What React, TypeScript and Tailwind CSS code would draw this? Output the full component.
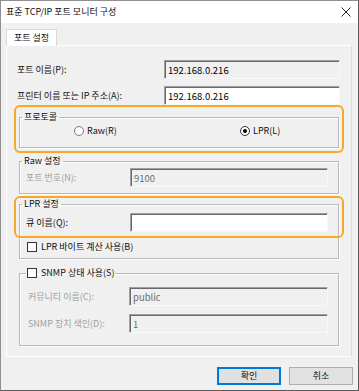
import type { ReactNode } from 'react';

const font = { fontFamily: '"Noto Sans CJK KR", "Noto Sans", sans-serif' };

function Sunken({ value, disabled, white }: { value: string; disabled?: boolean; white?: boolean }) {
  return (
    <div
      className={`h-[19px] flex items-center px-[3px] text-[9.5px] border border-t-[#a0a0a0] border-l-[#a0a0a0] border-r-[#f8f8f8] border-b-[#f8f8f8] shadow-[inset_1px_1px_0_#696969] ${
        white ? 'bg-white' : 'bg-[#f0f0f0]'
      } ${disabled ? 'text-[#6d6d6d]' : 'text-black'}`}
    >
      {value}
    </div>
  );
}

function Group({ legend, children, className }: { legend: ReactNode; children: ReactNode; className: string }) {
  return (
    <fieldset className={`mx-[12px] border border-[#b9b9b9] shadow-[1px_1px_0_#fff,inset_1px_1px_0_#fff] ${className}`}>
      <legend className="ml-[2px] px-[2px] h-[14px] leading-[14px]">{legend}</legend>
      {children}
    </fieldset>
  );
}

function Radio({ checked, label }: { checked?: boolean; label: string }) {
  return (
    <div className="flex items-center gap-[3px]">
      <span
        className={`size-[10px] rounded-full border bg-white flex items-center justify-center ${
          checked ? 'border-[#333]' : 'border-[#777]'
        }`}
      >
        {checked && <span className="size-[4px] rounded-full bg-black" />}
      </span>
      <span>{label}</span>
    </div>
  );
}

function Checkbox() {
  return <span className="size-[10px] border border-[#333] bg-white shrink-0" />;
}

export default function App() {
  return (
    <div
      style={font}
      className="relative w-[359px] h-[391px] flex flex-col text-[9px] leading-[14px] text-[#111] bg-[#f0f0f0] border border-[#8f8f8f] border-r-[#5a5a5a] border-b-[#5a5a5a]"
    >
      <div className="h-[22px] shrink-0 bg-white flex items-center justify-between pl-[5px] pr-[7px]">
        <span>표준 TCP/IP 포트 모니터 구성</span>
        <svg width="10" height="10" viewBox="0 0 10 10" stroke="#222" strokeWidth="1">
          <path d="M0.5 0.5 L9.5 9.5 M9.5 0.5 L0.5 9.5" />
        </svg>
      </div>

      <div className="px-[5px] pt-[6px]">
        <div className="flex">
          <div className="relative z-10 w-[51px] h-[17px] -mb-px bg-white border border-[#d9d9d9] border-b-0 flex items-center justify-center">
            포트 설정
          </div>
        </div>

        <div className="w-[346px] h-[312px] border border-white border-r-[#dcdcdc] pt-[14px]">
          <div className="flex items-center justify-between pl-[10px] pr-[11px]">
            <span>포트 이름(P):</span>
            <div className="w-[176px]">
              <Sunken value="192.168.0.216" />
            </div>
          </div>
          <div className="flex items-center justify-between pl-[10px] pr-[11px] mt-[7px]">
            <span>프린터 이름 또는 IP 주소(A):</span>
            <div className="w-[176px]">
              <Sunken value="192.168.0.216" white />
            </div>
          </div>

          <Group legend="프로토콜" className="mt-[5px] pb-[9px]">
            <div className="h-[14px] flex items-center pl-[54px]">
              <div className="w-[166px]">
                <Radio label="Raw(R)" />
              </div>
              <Radio checked label="LPR(L)" />
            </div>
          </Group>

          <Group legend="Raw 설정" className="mt-[6px] pb-[6px]">
            <div className="flex items-center justify-between pl-[6px] pr-[10px]">
              <span className="text-[#a0a0a0]">포트 번호(N):</span>
              <div className="w-[198px]">
                <Sunken value="9100" disabled />
              </div>
            </div>
          </Group>

          <Group legend="LPR 설정" className="mt-[3px] pb-[6px]">
            <div className="flex items-center justify-between pl-[6px] pr-[10px] mt-[2px]">
              <span>큐 이름(Q):</span>
              <div className="w-[198px]">
                <Sunken value="" white />
              </div>
            </div>
            <div className="flex items-center gap-[4px] pl-[7px] mt-[10px] h-[10px]">
              <Checkbox />
              <span>LPR 바이트 계산 사용(B)</span>
            </div>
          </Group>

          <Group
            legend={
              <span className="flex items-center gap-[4px]">
                <Checkbox />
                SNMP 상태 사용(S)
              </span>
            }
            className="mt-[7px] pb-[12px] [&>legend]:ml-[6px] [&>legend]:px-[1px]"
          >
            <div className="flex items-center justify-between pl-[8px] pr-[10px] mt-[7px] text-[#a0a0a0]">
              <span>커뮤니티 이름(C):</span>
              <div className="w-[199px]">
                <Sunken value="public" disabled />
              </div>
            </div>
            <div className="flex items-center justify-between pl-[8px] pr-[10px] mt-[8px] text-[#a0a0a0]">
              <span>SNMP 장치 색인(D):</span>
              <div className="w-[199px]">
                <Sunken value="1" disabled />
              </div>
            </div>
          </Group>
        </div>

        <div className="flex justify-end gap-[8px] mt-[10px]">
          <button className="w-[64px] h-[18px] bg-[#e1e1e1] border border-[#0078d7] shadow-[inset_0_0_0_1px_#0078d7] leading-[14px]">
            확인
          </button>
          <button className="w-[64px] h-[18px] bg-[#e1e1e1] border border-[#adadad] leading-[14px]">
            취소
          </button>
        </div>
      </div>

      <div className="absolute left-[13px] top-[104px] w-[330px] h-[48px] border-2 border-[#f9a825] rounded-[6px]" />
      <div className="absolute left-[13px] top-[195px] w-[330px] h-[42px] border-2 border-[#f9a825] rounded-[6px]" />
    </div>
  );
}
